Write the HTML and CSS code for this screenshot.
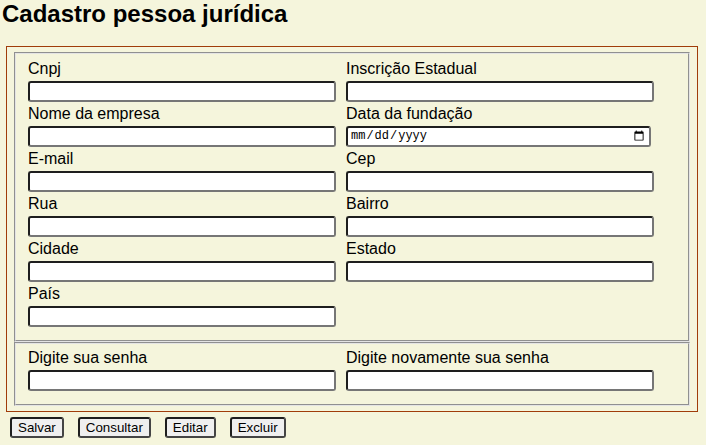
FILE: index.html
```html
<!DOCTYPE html>
<html lang="pt-BR">
<head>
<meta charset="utf-8">
<title>Cadastro pessoa jurídica</title>
<link rel="stylesheet" href="styles.css">
</head>
<body>
<h1 class="title">Cadastro pessoa jurídica</h1>
<form class="form-box">
  <fieldset class="group">
    <div class="fields">
      <div class="field"><label>Cnpj</label><input type="text"></div>
      <div class="field"><label>Inscrição Estadual</label><input type="text"></div>
      <div class="field"><label>Nome da empresa</label><input type="text"></div>
      <div class="field"><label>Data da fundação</label><input type="date" class="date"></div>
      <div class="field"><label>E-mail</label><input type="text"></div>
      <div class="field"><label>Cep</label><input type="text"></div>
      <div class="field"><label>Rua</label><input type="text"></div>
      <div class="field"><label>Bairro</label><input type="text"></div>
      <div class="field"><label>Cidade</label><input type="text"></div>
      <div class="field"><label>Estado</label><input type="text"></div>
      <div class="field"><label>País</label><input type="text"></div>
    </div>
  </fieldset>
  <fieldset class="group">
    <div class="fields">
      <div class="field"><label>Digite sua senha</label><input type="password"></div>
      <div class="field"><label>Digite novamente sua senha</label><input type="password"></div>
    </div>
  </fieldset>
</form>
<div class="actions">
  <button type="button" class="btn">Salvar</button>
  <button type="button" class="btn">Consultar</button>
  <button type="button" class="btn">Editar</button>
  <button type="button" class="btn">Excluir</button>
</div>
</body>
</html>
```
FILE: styles.css
```css
html, body {
  margin: 0;
  padding: 0;
}
body {
  background: #f5f5dc;
  font-family: "Liberation Sans", Arial, sans-serif;
  font-size: 16px;
  color: #000;
}
.title {
  font-size: 24px;
  font-weight: bold;
  line-height: 28px;
  margin: 0 0 0 2px;
}
.form-box {
  margin: 18px 0 0 6px;
  width: 692px;
  box-sizing: border-box;
  border: 1px solid #a03c0a;
  padding: 5px;
}
.group {
  margin: 0 2px;
  border: 2px groove #e4e4e4;
  padding: 5.6px 12px 10px;
}
.fields {
  display: grid;
  grid-template-columns: 318px 318px;
}
.field {
  margin-bottom: 3px;
}
.field label {
  display: block;
  line-height: 18px;
  margin-bottom: 3px;
}
.field input {
  display: block;
  width: 308px;
  height: 21px;
  box-sizing: border-box;
  margin: 0;
  border: 2px solid;
  border-color: #1e1e1e #767676 #767676 #1e1e1e;
  border-radius: 3px;
  background: #fff;
  font-family: "Liberation Sans", Arial, sans-serif;
  font-size: 13.33px;
  padding: 1px 2px;
}
.field input.date {
  width: 305px;
  font-family: "Liberation Mono", monospace;
  font-size: 12px;
  padding: 0 2px;
}
.actions {
  display: flex;
  gap: 14px;
  margin: 5px 0 0 10px;
}
.btn {
  font-family: "Liberation Sans", Arial, sans-serif;
  font-size: 13.33px;
  line-height: 15px;
  padding: 1px 6px;
  border: 2px solid;
  border-color: #1e1e1e #444 #444 #1e1e1e;
  border-radius: 3px;
  background: #efefef;
  color: #000;
}
```
